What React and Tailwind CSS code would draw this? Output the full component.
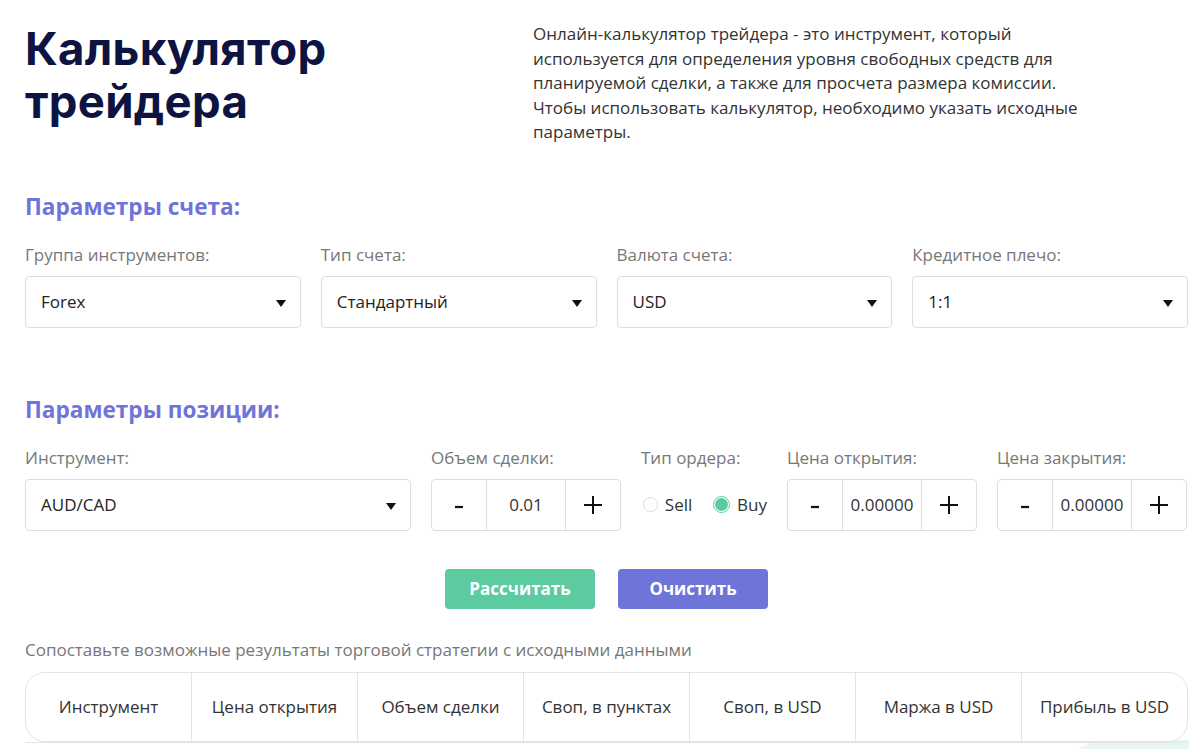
import React from "react";

const font = { fontFamily: '"Open Sans", "Noto Sans", sans-serif' };

function Arrow() {
  return (
    <svg width="10" height="7" viewBox="0 0 10 7" className="shrink-0">
      <path d="M0 0 H10 L5 7 Z" fill="#111" />
    </svg>
  );
}

function Plus() {
  return (
    <svg width="18" height="18" viewBox="0 0 18 18">
      <path d="M9 0 V18 M0 9 H18" stroke="#111" strokeWidth="2" />
    </svg>
  );
}

function Minus() {
  return (
    <svg width="8" height="18" viewBox="0 0 8 18">
      <path d="M0 11 H8" stroke="#111" strokeWidth="2.2" />
    </svg>
  );
}

function Select({ value, className = "" }) {
  return (
    <div
      className={`h-[52px] border border-[#dedede] rounded-[4px] bg-white flex items-center justify-between pl-[15px] pr-[14px] text-[17px] text-[#222] ${className}`}
    >
      <span>{value}</span>
      <span className="mt-[3px]"><Arrow /></span>
    </div>
  );
}

function Field({ label, children, className = "" }) {
  return (
    <div className={`flex flex-col ${className}`}>
      <div className="text-[17px] text-[#777] leading-[22px] mb-[10px] whitespace-nowrap">{label}</div>
      {children}
    </div>
  );
}

function Stepper({ value }) {
  return (
    <div className="h-[52px] w-[190px] border border-[#dedede] rounded-[4px] flex bg-white">
      <div className="w-[55px] flex items-center justify-center border-r border-[#dedede]"><Minus /></div>
      <div className="flex-1 flex items-center justify-center text-[17px] text-[#333]">{value}</div>
      <div className="w-[55px] flex items-center justify-center border-l border-[#dedede]"><Plus /></div>
    </div>
  );
}

export default function App() {
  const cols = ["Инструмент", "Цена открытия", "Объем сделки", "Своп, в пунктах", "Своп, в USD", "Маржа в USD", "Прибыль в USD"];
  return (
    <div className="w-[1189px] h-[749px] bg-white overflow-hidden relative" style={font}>
      <div className="absolute left-[1050px] top-[740px] w-[260px] h-[60px] rounded-tl-[60px] bg-[#e6f7f1]" />
      <div className="relative pl-[25px] pr-[1px]">
        <div className="flex pt-[22px]">
          <h1
            className="w-[508px] text-[45.5px] leading-[53px] font-bold text-[#0d1442] tracking-[0.3px]"
            style={{ fontFamily: '"Inter", "Noto Sans", sans-serif', fontWeight: 700 }}
          >
            Калькулятор<br />трейдера
          </h1>
          <p className="w-[550px] text-[17px] leading-[24.5px] text-[#333]">
            Онлайн-калькулятор трейдера - это инструмент, который используется для определения уровня свободных средств для планируемой сделки, а также для просчета размера комиссии. Чтобы использовать калькулятор, необходимо указать исходные параметры.
          </p>
        </div>

        <h2 className="mt-[47px] text-[22.6px] leading-[30px] font-bold text-[#6f74d8]">Параметры счета:</h2>
        <div className="grid grid-cols-4 gap-x-[20px] mt-[22px]">
          <Field label="Группа инструментов:"><Select value="Forex" /></Field>
          <Field label="Тип счета:"><Select value="Стандартный" /></Field>
          <Field label="Валюта счета:"><Select value="USD" /></Field>
          <Field label="Кредитное плечо:"><Select value="1:1" /></Field>
        </div>

        <h2 className="mt-[67px] text-[22.6px] leading-[30px] font-bold text-[#6f74d8]">Параметры позиции:</h2>
        <div className="flex gap-x-[20px] mt-[22px]">
          <Field label="Инструмент:" className="w-[386px]"><Select value="AUD/CAD" /></Field>
          <Field label="Объем сделки:"><Stepper value="0.01" /></Field>
          <Field label="Тип ордера:" className="w-[126px]">
            <div className="h-[52px] flex items-center text-[17px] text-[#333]">
              <span className="w-[15px] h-[15px] rounded-full border border-[#dcdcdc] mr-[7px] ml-[2px]" />
              <span>Sell</span>
              <span className="w-[17px] h-[17px] rounded-full border border-[#5ccba0] bg-white flex items-center justify-center ml-[21px] mr-[7px]">
                <span className="w-[13px] h-[13px] rounded-full bg-[#5ccba0]" />
              </span>
              <span>Buy</span>
            </div>
          </Field>
          <Field label="Цена открытия:"><Stepper value="0.00000" /></Field>
          <Field label="Цена закрытия:"><Stepper value="0.00000" /></Field>
        </div>

        <div className="flex justify-center gap-[23px] mt-[38px]">
          <button className="w-[150px] h-[40px] rounded-[4px] bg-[#5ccba0] text-white text-[17px] font-bold">Рассчитать</button>
          <button className="w-[150px] h-[40px] rounded-[4px] bg-[#6f74d8] text-white text-[17px] font-bold">Очистить</button>
        </div>

        <div className="mt-[30px] text-[17px] leading-[22px] text-[#777]">
          Сопоставьте возможные результаты торговой стратегии с исходными данными
        </div>
        <div className="mt-[11px] border-b border-[#e3e3e3]">
          <div className="h-[70px] border border-[#e3e3e3] rounded-[20px] flex bg-white">
            {cols.map((c, i) => (
              <div
                key={c}
                className={`flex-1 flex items-center justify-center text-[17px] text-[#333] whitespace-nowrap ${i > 0 ? "border-l border-[#e3e3e3]" : ""}`}
              >
                {c}
              </div>
            ))}
          </div>
        </div>
      </div>
    </div>
  );
}
